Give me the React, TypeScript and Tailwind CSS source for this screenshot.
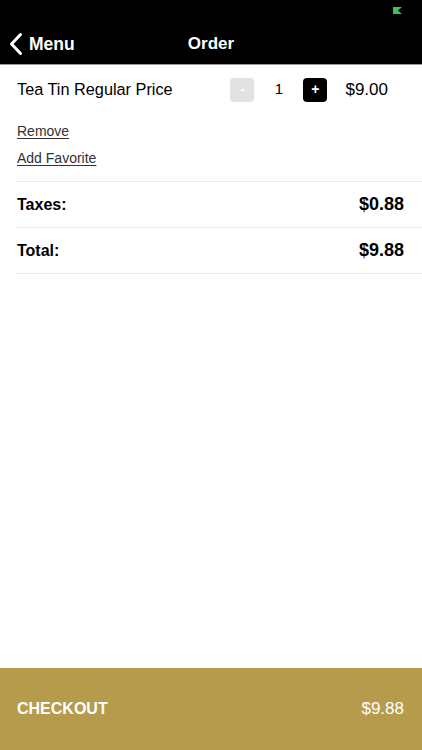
const font = { fontFamily: '"Liberation Sans", Arial, sans-serif' };

export default function App() {
  return (
    <div className="w-[422px] h-[750px] bg-white flex flex-col text-black" style={font}>
      {/* Header */}
      <div className="bg-black h-[65px] border-b border-[#9a9a9a] relative shrink-0">
        <div className="absolute left-[393px] top-[7px] w-[9px] h-[7px] bg-[#34c759] [clip-path:polygon(0_0,100%_0,55%_50%,100%_100%,0_100%)]" />
        <div className="absolute left-0 right-0 top-[29px] h-[30px] flex items-center justify-center">
          <span className="text-white font-bold text-[17px]">Order</span>
        </div>
        <div className="absolute left-[9px] top-[31px] flex items-center gap-[6px]">
          <svg width="14" height="24" viewBox="0 0 14 24" fill="none">
            <path d="M11.5 2.5 L2.5 12 L11.5 21.5" stroke="white" strokeWidth="3" strokeLinecap="round" strokeLinejoin="round" />
          </svg>
          <span className="text-white font-bold text-[17.5px]">Menu</span>
        </div>
      </div>

      {/* Item */}
      <div className="pl-[17px] pr-[34px] pt-[12px] flex items-center h-[37px]">
        <span className="flex-1 text-[16.3px]">Tea Tin Regular Price</span>
        <div className="w-[24px] h-[24px] rounded-[4px] bg-[#e2e2e2] flex items-center justify-center text-white text-[13px] font-bold">-</div>
        <span className="w-[49px] text-center text-[15px]">1</span>
        <div className="w-[24px] h-[24px] rounded-[4px] bg-black flex items-center justify-center text-white text-[14px] font-bold">+</div>
        <span className="ml-[18px] text-[17px]">$9.00</span>
      </div>

      <div className="pl-[17px] pt-[21px] flex flex-col gap-[10px] text-[14px] text-[#333]">
        <span className="underline underline-offset-2 h-[17px] leading-[17px]">Remove</span>
        <span className="underline underline-offset-2 h-[17px] leading-[17px]">Add Favorite</span>
      </div>

      <div className="ml-[16px] mt-[14px] border-t border-[#ebebeb]">
        <div className="h-[46px] flex items-center justify-between pr-[18px] font-bold text-[16px] border-b border-[#ebebeb]">
          <span className="pl-px">Taxes:</span>
          <span className="text-[18px]">$0.88</span>
        </div>
        <div className="h-[46px] flex items-center justify-between pr-[18px] font-bold text-[16px] border-b border-[#ebebeb]">
          <span className="pl-px">Total:</span>
          <span className="text-[18px]">$9.88</span>
        </div>
      </div>

      <div className="flex-1" />

      {/* Checkout bar */}
      <div className="h-[82px] bg-[#b69b4c] flex items-center justify-between pl-[17px] pr-[18px] text-white shrink-0">
        <span className="font-bold text-[16px]">CHECKOUT</span>
        <span className="text-[17px]">$9.88</span>
      </div>
    </div>
  );
}
